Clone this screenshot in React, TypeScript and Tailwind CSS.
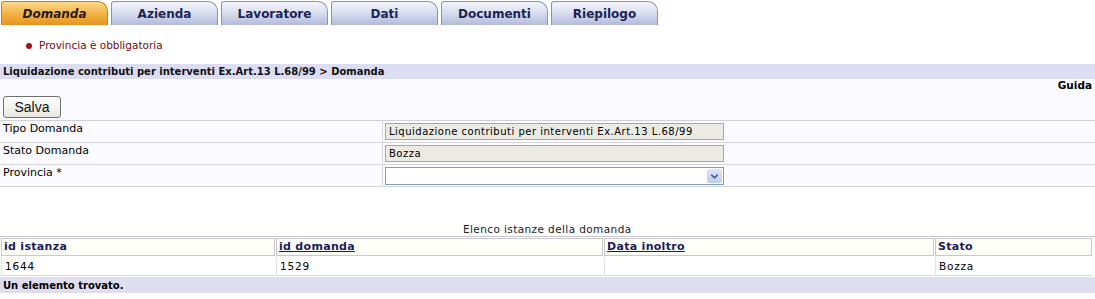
import { ChevronDown } from 'lucide-react'

const tabs = ['Domanda', 'Azienda', 'Lavoratore', 'Dati', 'Documenti', 'Riepilogo']

const rows = [
  { label: 'Tipo Domanda', value: 'Liquidazione contributi per interventi Ex.Art.13 L.68/99', kind: 'ro' },
  { label: 'Stato Domanda', value: 'Bozza', kind: 'ro' },
  { label: 'Provincia *', value: '', kind: 'select' },
]

export default function App() {
  return (
    <div className="h-[299px] w-[1095px] overflow-hidden bg-white font-['DejaVu_Sans',sans-serif] text-black">
      {/* tabs */}
      <div className="flex h-[26px] gap-[3px] pl-[1px] pt-[1px]">
        {tabs.map((tab, i) => (
          <div
            key={tab}
            className={
              i === 0
                ? 'flex h-[24px] w-[107px] items-center justify-center rounded-tl-[3px] rounded-tr-[10px] border border-b-0 border-[#c8801e] bg-gradient-to-b from-[#fcd98a] via-[#f3b445] to-[#e69420] text-[12px] font-bold italic text-[#2a1a08]'
                : 'flex h-[24px] w-[107px] items-center justify-center rounded-tl-[3px] rounded-tr-[10px] border border-b-0 border-[#8a93b5] bg-gradient-to-b from-[#f4f5fb] via-[#d8dcee] to-[#b3badb] text-[12px] font-bold text-[#1c2456]'
            }
          >
            {tab}
          </div>
        ))}
      </div>

      {/* messages */}
      <div className="flex h-[38px] items-center pl-[26px] pt-[1px] text-[10.5px] text-[#7a0a0a]">
        <span className="mr-[7px] inline-block h-[6px] w-[6px] rounded-full bg-[#a0101a]" />
        Provincia è obbligatoria
      </div>

      {/* title bar */}
      <div className="flex h-[15px] items-center bg-[#dcdcf2] pl-[3px] text-[10px] font-bold text-[#111]">
        Liquidazione contributi per interventi Ex.Art.13 L.68/99 &gt; Domanda
      </div>

      <div className="bg-[#fafaff]">
        <div className="flex h-[15px] items-end justify-end pr-[3px] text-[10.5px] font-bold">Guida</div>
        <div className="h-[26px] pl-[3px] pt-[1px]">
          <button className="h-[22px] w-[58px] rounded-[3px] border border-[#707070] bg-gradient-to-b from-[#fdfdfb] to-[#e9e9e2] font-['Liberation_Sans',sans-serif] text-[14px] text-[#111]">
            Salva
          </button>
        </div>

        <div className="border-t border-[#cfcfd6]">
          {rows.map((row) => (
            <div key={row.label} className="flex h-[22px] border-b border-[#d4d4dc]">
              <div className="w-[383px] border-r border-[#d8d8de] pl-[3px] pt-[1px] text-[11px] leading-[13px]">
                {row.label}
              </div>
              <div className="flex-1 pl-[2px] pt-[2px]">
                {row.kind === 'ro' ? (
                  <div className="flex h-[17px] w-[339px] items-center border border-[#a8a8a0] bg-[#ebebe4] pl-[3px] text-[10px] tracking-[0.5px]">
                    {row.value}
                  </div>
                ) : (
                  <div className="flex h-[18px] w-[339px] items-center justify-end border border-[#7f9db9] bg-white pr-[1px]">
                    <div className="flex h-[14px] w-[15px] items-center justify-center rounded-[2px] bg-gradient-to-b from-[#dfe6fb] to-[#bccbf3]">
                      <ChevronDown size={11} strokeWidth={3.5} className="text-[#4d6185]" />
                    </div>
                  </div>
                )}
              </div>
            </div>
          ))}
        </div>
      </div>

      {/* list */}
      <div className="pt-[35px]">
        <div className="h-[14px] pl-[463px] text-[10.5px] leading-[14px] tracking-[0.4px] text-[#222]">Elenco istanze della domanda</div>
        <div className="grid grid-cols-[274px_327px_330px_157px] gap-x-[1px] border-t border-[#c8c8cc] px-[1px] pt-[1px]">
          {['id istanza', 'id domanda', 'Data inoltro', 'Stato'].map((h, i) => (
            <div
              key={h}
              className={
                'h-[18px] border border-[#c8c8cc] bg-[#fffffa] pl-[2px] text-[11px] font-bold leading-[16px] tracking-[0.3px] text-[#1a1a5c]' +
                (i === 1 || i === 2 ? ' underline' : '')
              }
            >
              {h}
            </div>
          ))}
          {['1644', '1529', '', 'Bozza'].map((c, i) => (
            <div key={i} className="mt-[1px] h-[19px] border-b border-[#d6d6da] border-l border-l-[#e2e2e6] bg-white pl-[3px] text-[10.5px] leading-[18px] tracking-[0.8px]">
              {c}
            </div>
          ))}
        </div>
        <div className="mt-[1px] flex h-[16px] items-center bg-[#dedef0] pl-[3px] text-[10px] font-bold">
          Un elemento trovato.
        </div>
      </div>
    </div>
  )
}
